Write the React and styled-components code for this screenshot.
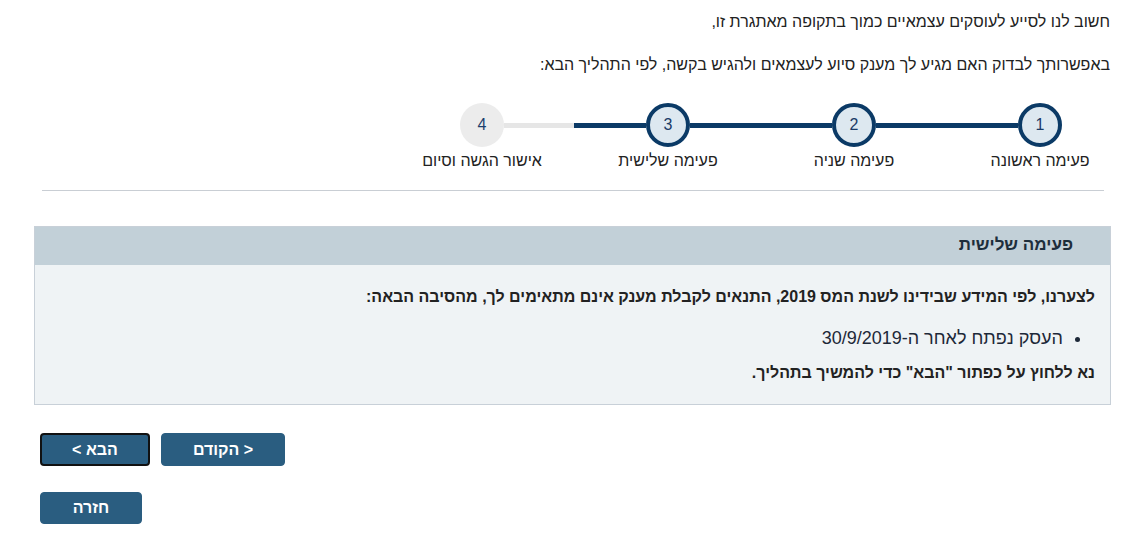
import styled, { createGlobalStyle } from 'styled-components';

const GlobalStyle = createGlobalStyle`
    body {
        margin: 0;
        background: #fff;
        font-family: 'Liberation Sans', Arial, sans-serif;
        color: #222;
    }
`;

const navy = '#0b3a66';

//--------Styles--------//
const Page = styled.div`
    direction: rtl;
    padding: 12px 23px 0 34px;
    font-size: 16px;
`;

const Intro = styled.p`
    margin: 0 0 23px;
    line-height: 20px;
    padding-right: 1px;
`;

const Stepper = styled.div`
    display: flex;
    align-items: flex-start;
    margin: 28px 49px 0 0;
`;

const Step = styled.div`
    width: 44px;
    display: flex;
    flex-direction: column;
    align-items: center;
`;

const Circle = styled.div`
    width: 44px;
    height: 44px;
    box-sizing: border-box;
    border-radius: 50%;
    display: flex;
    align-items: center;
    justify-content: center;
    font-size: 16px;
    color: ${props => (props.$done ? '#1a3a66' : '#1c3f6e')};
    background: ${props => (props.$done ? '#dde8f0' : '#ececec')};
    border: ${props => (props.$done ? `4px solid ${navy}` : 'none')};
`;

const StepLabel = styled.div`
    margin-top: 5px;
    white-space: nowrap;
    line-height: 18px;
    color: #222;
`;

const Connector = styled.div`
    width: 142px;
    height: 5px;
    margin-top: 20px;
    background: ${props =>
        props.$half
            ? `linear-gradient(to left, ${navy} 51%, #e6e6e6 51%)`
            : navy};
`;

const Divider = styled.hr`
    border: none;
    border-top: 1px solid #c9ced4;
    margin: 20px 7px 0 8px;
`;

const Panel = styled.section`
    margin-top: 35px;
    border: 1px solid #c8d0d8;
    background: #eff3f5;
`;

const PanelHeader = styled.h3`
    margin: 0;
    height: 38px;
    line-height: 36px;
    padding-right: 37px;
    background: #c2d0d8;
    font-size: 17px;
    font-weight: bold;
    color: #1d2e3c;
`;

const PanelBody = styled.div`
    padding: 22px 15px 21px;
    color: #222;
`;

const BodyText = styled.p`
    margin: 0;
    line-height: 20px;
    font-weight: ${props => (props.$bold ? 'bold' : 'normal')};
`;

const ReasonList = styled.ul`
    margin: 20px 0 14px;
    padding-right: 32px;
    font-size: 18px;
    line-height: 22px;
    color: #1d2838;
`;

const ButtonRow = styled.div`
    display: flex;
    justify-content: flex-end;
    gap: 11px;
    margin: ${props => props.$margin};
    padding-left: 6px;
`;

const Button = styled.button`
    width: ${props => props.$width}px;
    height: ${props => props.$height || 33}px;
    box-sizing: border-box;
    border-radius: 4px;
    border: ${props => (props.$focused ? '2px solid #111' : '1px solid #2a5d80')};
    background: #2a5d80;
    color: #fff;
    font-family: 'Liberation Sans', Arial, sans-serif;
    font-size: 16px;
    font-weight: bold;
    cursor: pointer;
    padding: 0;
`;

const steps = [
    { num: 1, label: 'פעימה ראשונה', done: true },
    { num: 2, label: 'פעימה שניה', done: true },
    { num: 3, label: 'פעימה שלישית', done: true },
    { num: 4, label: 'אישור הגשה וסיום', done: false },
];

export default function App() {
    return (
        <Page>
            <GlobalStyle />
            <Intro>חשוב לנו לסייע לעוסקים עצמאיים כמוך בתקופה מאתגרת זו,</Intro>
            <Intro>באפשרותך לבדוק האם מגיע לך מענק סיוע לעצמאים ולהגיש בקשה, לפי התהליך הבא:</Intro>

            <Stepper>
                {steps.map((s, i) => (
                    <StepGroup key={s.num} step={s} last={i === steps.length - 1} half={i === steps.length - 2} />
                ))}
            </Stepper>

            <Divider />

            <Panel>
                <PanelHeader>פעימה שלישית</PanelHeader>
                <PanelBody>
                    <BodyText $bold>לצערנו, לפי המידע שבידינו לשנת המס 2019, התנאים לקבלת מענק אינם מתאימים לך, מהסיבה הבאה:</BodyText>
                    <ReasonList>
                        <li>העסק נפתח לאחר ה-30/9/2019</li>
                    </ReasonList>
                    <BodyText $bold>נא ללחוץ על כפתור "הבא" כדי להמשיך בתהליך.</BodyText>
                </PanelBody>
            </Panel>

            <ButtonRow $margin="28px 0 0">
                <Button $width={124}>&lt; הקודם</Button>
                <Button $width={110} $focused>הבא &gt;</Button>
            </ButtonRow>
            <ButtonRow $margin="26px 0 0">
                <Button $width={102} $height={32}>חזרה</Button>
            </ButtonRow>
        </Page>
    );
}

function StepGroup({ step, last, half }) {
    return (
        <>
            <Step>
                <Circle $done={step.done}>{step.num}</Circle>
                <StepLabel>{step.label}</StepLabel>
            </Step>
            {!last && <Connector $half={half} />}
        </>
    );
}
